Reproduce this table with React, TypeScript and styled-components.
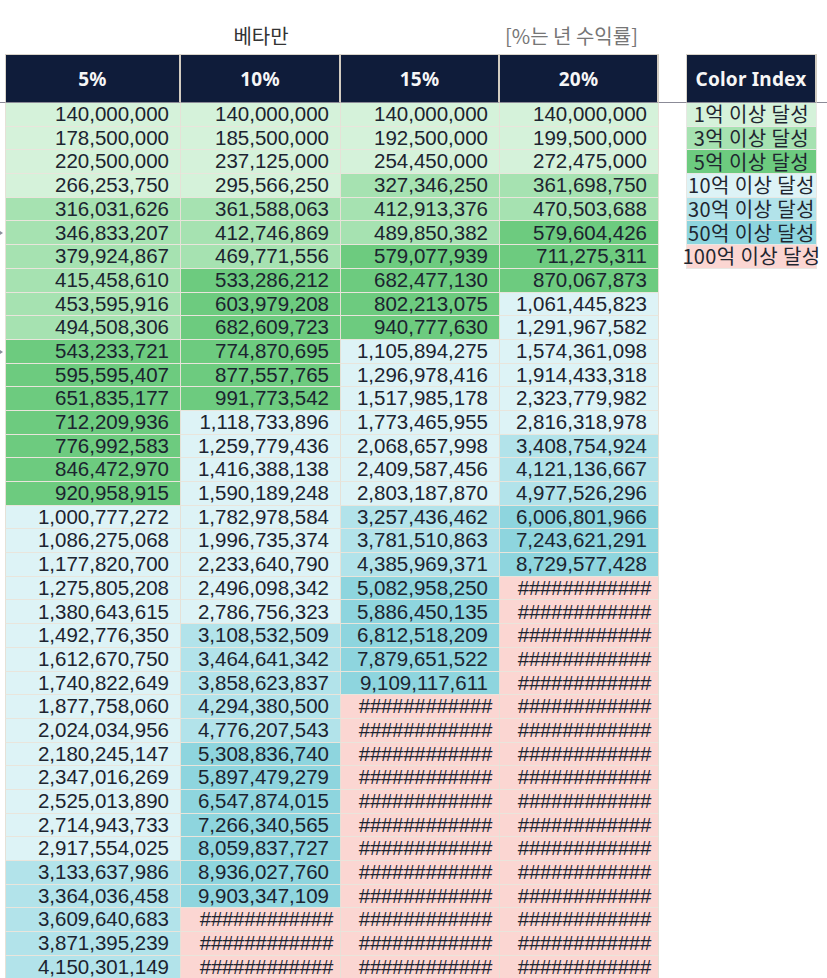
import React from "react";
import styled, { createGlobalStyle } from "styled-components";

const GlobalStyle = createGlobalStyle`
  html, body {
    margin: 0;
    padding: 0;
    background: #fff;
  }
  body {
    font-family: "Liberation Sans", Arial, sans-serif;
    overflow: hidden;
  }
`;

const tones = {
  g1: "#d5f2da",
  g2: "#a6e2b1",
  g3: "#6dcb7f",
  c1: "#ddf3f6",
  c2: "#b2e3ea",
  c3: "#8ed5de",
  p: "#fbd6d2",
};

type Tone = keyof typeof tones;

const toneFor = (v: number | null): Tone => {
  if (v === null) return "p";
  if (v < 3e8) return "g1";
  if (v < 5e8) return "g2";
  if (v < 1e9) return "g3";
  if (v < 3e9) return "c1";
  if (v < 5e9) return "c2";
  if (v < 1e10) return "c3";
  return "p";
};

const Sheet = styled.div`
  display: grid;
  grid-template-columns: 5px 176px 160px 159px 159px 27px 131px 1fr;
  grid-template-rows: 54px 49px;
  grid-auto-rows: 23.7px;
  width: 827px;
  height: 978px;
  overflow: hidden;
`;

const Blank = styled.div``;

const Title = styled.div<{ $muted?: boolean }>`
  display: flex;
  align-items: center;
  justify-content: ${(p) => (p.$muted ? "flex-start" : "center")};
  padding: 16px 0 0 ${(p) => (p.$muted ? "5px" : "0")};
  font-family: "Noto Sans CJK KR", "Noto Sans", sans-serif;
  font-size: 20px;
  color: ${(p) => (p.$muted ? "#767676" : "#333")};
  white-space: nowrap;
`;

const Rule = styled.div`
  border-bottom: 1px solid #8b8b97;
`;

const HeaderCell = styled.div<{ $first?: boolean }>`
  display: flex;
  align-items: center;
  justify-content: center;
  background: #0f1c3a;
  color: #f6f6f6;
  font-family: "Noto Sans", "Open Sans", sans-serif;
  font-weight: 700;
  font-size: 19px;
  letter-spacing: 0.2px;
  border-top: 1px solid #d9d4ca;
  border-right: 2px solid #d2ccc1;
  border-left: ${(p) => (p.$first ? "1px solid #d9d4ca" : "none")};
  border-bottom: 1px solid #8b8b97;
`;

const ValueCell = styled.div<{ $tone: Tone; $first?: boolean; $hash?: boolean }>`
  display: flex;
  align-items: center;
  justify-content: flex-end;
  padding-right: ${(p) => (p.$hash ? "7px" : "11px")};
  background: ${(p) => tones[p.$tone]};
  color: #1c2430;
  font-size: 20.5px;
  line-height: 1;
  letter-spacing: ${(p) => (p.$hash ? "-0.3px" : "0")};
  border-right: 1px solid #e6e1d7;
  border-bottom: 1px solid #e9e5dc;
  border-left: ${(p) => (p.$first ? "1px solid #e6e1d7" : "none")};
  white-space: nowrap;
`;

const LegendCell = styled.div<{ $tone: Tone }>`
  display: flex;
  align-items: center;
  justify-content: center;
  background: ${(p) => tones[p.$tone]};
  color: #1f2630;
  font-family: "Noto Sans CJK KR", "Noto Sans", sans-serif;
  font-size: 20px;
  line-height: 20px;
  letter-spacing: 0.4px;
  border: 1px solid #e8e8e4;
  border-top: none;
  white-space: nowrap;
  overflow: visible;
`;

const Margin = styled.div<{ $marker?: boolean }>`
  display: flex;
  align-items: center;
  &::before {
    content: "";
    display: ${(p) => (p.$marker ? "block" : "none")};
    margin-left: -3px;
    width: 0;
    height: 0;
    border-top: 4px solid transparent;
    border-bottom: 4px solid transparent;
    border-left: 6px solid #8a8f9c;
  }
`;

const c5 = [
  "140,000,000", "178,500,000", "220,500,000", "266,253,750", "316,031,626",
  "346,833,207", "379,924,867", "415,458,610", "453,595,916", "494,508,306",
  "543,233,721", "595,595,407", "651,835,177", "712,209,936", "776,992,583",
  "846,472,970", "920,958,915", "1,000,777,272", "1,086,275,068", "1,177,820,700",
  "1,275,805,208", "1,380,643,615", "1,492,776,350", "1,612,670,750", "1,740,822,649",
  "1,877,758,060", "2,024,034,956", "2,180,245,147", "2,347,016,269", "2,525,013,890",
  "2,714,943,733", "2,917,554,025", "3,133,637,986", "3,364,036,458", "3,609,640,683",
  "3,871,395,239", "4,150,301,149",
];

const c10 = [
  "140,000,000", "185,500,000", "237,125,000", "295,566,250", "361,588,063",
  "412,746,869", "469,771,556", "533,286,212", "603,979,208", "682,609,723",
  "774,870,695", "877,557,765", "991,773,542", "1,118,733,896", "1,259,779,436",
  "1,416,388,138", "1,590,189,248", "1,782,978,584", "1,996,735,374", "2,233,640,790",
  "2,496,098,342", "2,786,756,323", "3,108,532,509", "3,464,641,342", "3,858,623,837",
  "4,294,380,500", "4,776,207,543", "5,308,836,740", "5,897,479,279", "6,547,874,015",
  "7,266,340,565", "8,059,837,727", "8,936,027,760", "9,903,347,109",
];

const c15 = [
  "140,000,000", "192,500,000", "254,450,000", "327,346,250", "412,913,376",
  "489,850,382", "579,077,939", "682,477,130", "802,213,075", "940,777,630",
  "1,105,894,275", "1,296,978,416", "1,517,985,178", "1,773,465,955", "2,068,657,998",
  "2,409,587,456", "2,803,187,870", "3,257,436,462", "3,781,510,863", "4,385,969,371",
  "5,082,958,250", "5,886,450,135", "6,812,518,209", "7,879,651,522", "9,109,117,611",
];

const c20 = [
  "140,000,000", "199,500,000", "272,475,000", "361,698,750", "470,503,688",
  "579,604,426", "711,275,311", "870,067,873", "1,061,445,823", "1,291,967,582",
  "1,574,361,098", "1,914,433,318", "2,323,779,982", "2,816,318,978", "3,408,754,924",
  "4,121,136,667", "4,977,526,296", "6,006,801,966", "7,243,621,291", "8,729,577,428",
];

const columns = [c5, c10, c15, c20];
const ROWS = 37;
const HASH = "############";

const legend: { label: string; tone: Tone }[] = [
  { label: "1억 이상 달성", tone: "g1" },
  { label: "3억 이상 달성", tone: "g2" },
  { label: "5억 이상 달성", tone: "g3" },
  { label: "10억 이상 달성", tone: "c1" },
  { label: "30억 이상 달성", tone: "c2" },
  { label: "50억 이상 달성", tone: "c3" },
  { label: "100억 이상 달성", tone: "p" },
];

const markerRows = [5, 10];

export default function App() {
  return (
    <>
      <GlobalStyle />
      <Sheet>
        <Blank />
        <Blank />
        <Title>베타만</Title>
        <Blank />
        <Title $muted>[%는 년 수익률]</Title>
        <Blank />
        <Blank />
        <Blank />

        <Rule />
        {["5%", "10%", "15%", "20%"].map((h, i) => (
          <HeaderCell key={h} $first={i === 0}>
            {h}
          </HeaderCell>
        ))}
        <Rule />
        <HeaderCell $first>Color Index</HeaderCell>
        <Rule />

        {Array.from({ length: ROWS }).map((_, r) => (
          <React.Fragment key={r}>
            <Margin $marker={markerRows.includes(r)} />
            {columns.map((col, ci) => {
              const text = col[r];
              const value = text ? Number(text.replace(/,/g, "")) : null;
              return (
                <ValueCell key={ci} $tone={toneFor(value)} $first={ci === 0} $hash={!text}>
                  {text ?? HASH}
                </ValueCell>
              );
            })}
            <Blank />
            {legend[r] ? (
              <LegendCell $tone={legend[r].tone}>{legend[r].label}</LegendCell>
            ) : (
              <Blank />
            )}
            <Blank />
          </React.Fragment>
        ))}
      </Sheet>
    </>
  );
}
